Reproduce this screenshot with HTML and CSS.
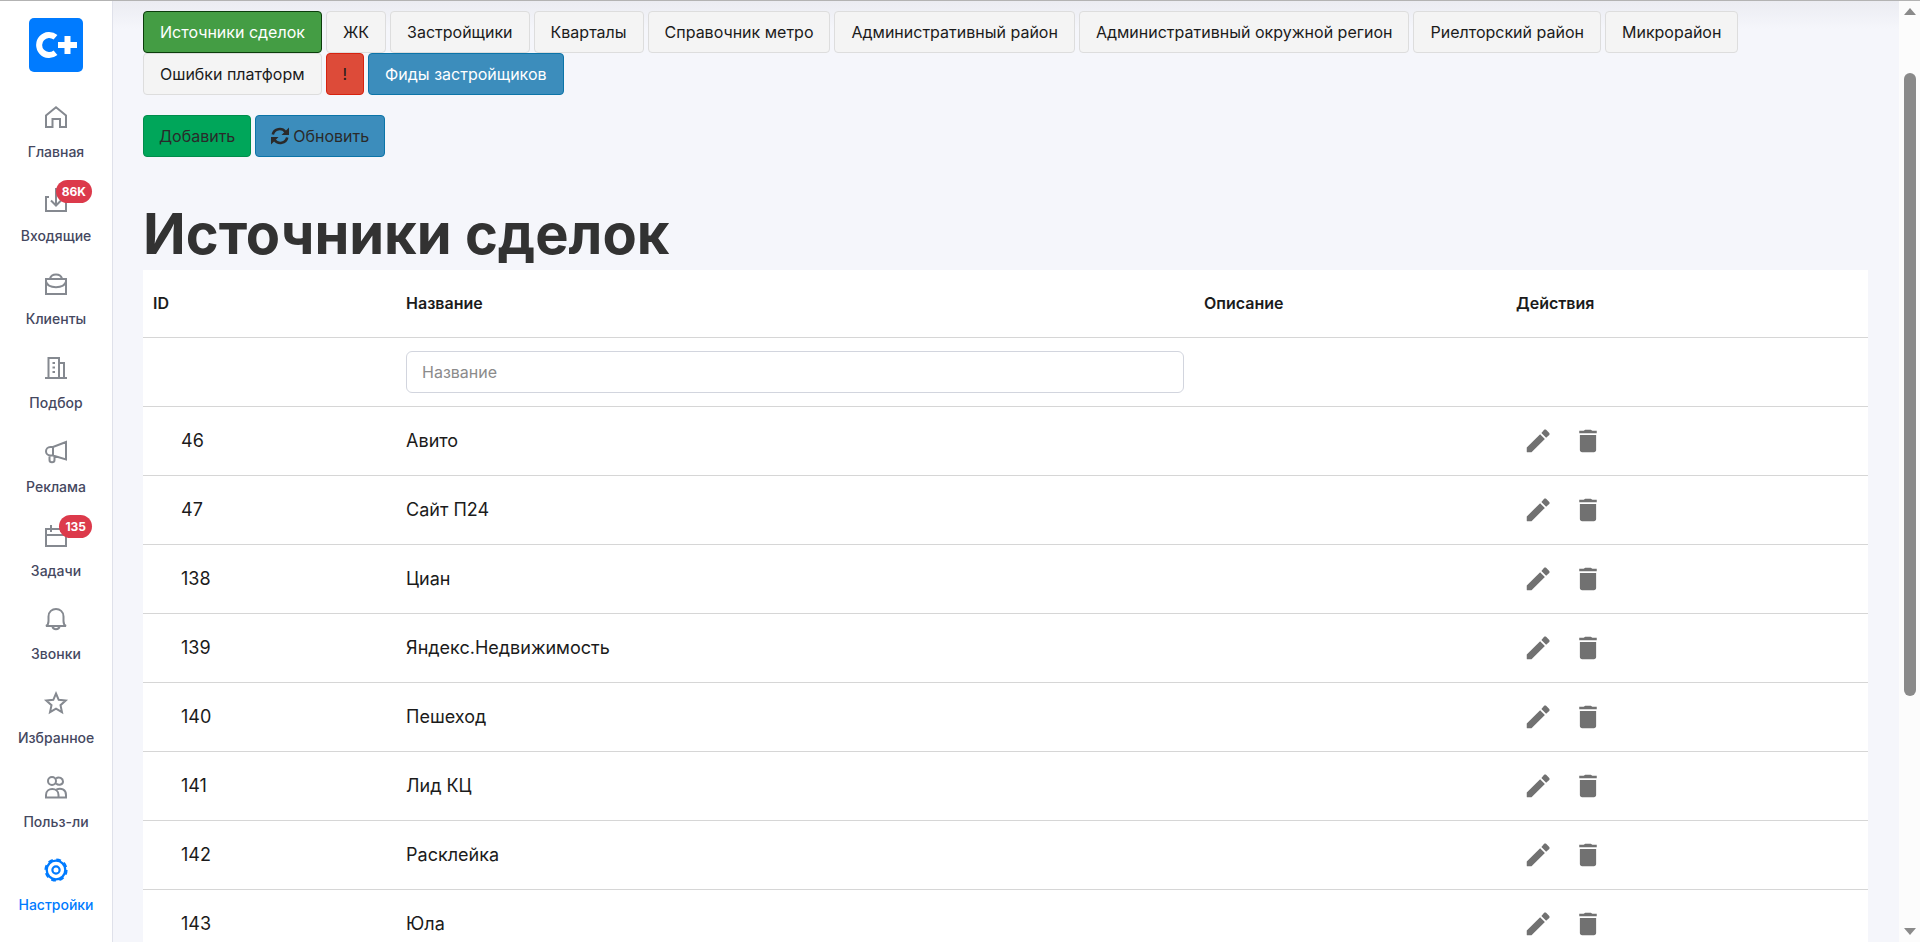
FILE: index.html
```html
<!DOCTYPE html>
<html lang="ru">
<head>
<meta charset="utf-8">
<title>Источники сделок</title>
<link rel="stylesheet" href="styles.css">
</head>
<body>
<svg class="sprite" aria-hidden="true">
  <symbol id="edit" viewBox="0 0 24 24"><path d="M3 17.2V20.5c0 .3.2.5.500.5H6.800L17.500 10.300 13.700 6.500zM21 5.500l-2.500-2.500c-.5-.4-1.100-.4-1.600 0L14.700 5.500l3.800 3.800L21 7.100c.4-.5.4-1.100 0-1.600z"/></symbol>
  <symbol id="trash" viewBox="0 0 24 24"><path d="M5.500 7.200h13v12c0 1-.8 1.800-1.800 1.800H7.300c-1 0-1.800-.8-1.800-1.800zM8.500 3.800 9.800 3h4.400l1.300.800H19v2H5v-2z"/></symbol>
</svg>
<div class="app">
  <aside class="sidebar">
    <a class="logo" href="#" aria-label="C+">
      <svg viewBox="0 0 54 54"><rect width="54" height="54" rx="5" fill="#007bff"/><path d="M26.500 19.300A10 10 0 1 0 26.500 34.700M29 27h19M38.500 18v18" fill="none" stroke="#fff" stroke-width="6"/></svg>
    </a>
    <nav class="menu">
      <a class="item" href="#"><svg class="icon" viewBox="0 0 22 22"><path d="M1 21V9.500L11 1.300 21 9.500V21h-6v-8H7.500v8z"/></svg><span class="label">Главная</span></a>
      <a class="item" href="#"><svg class="icon" viewBox="0 0 22 22"><path d="M4 7H1v14h20V7h-3M11 -2v17M6 10.500l5 5 5-5"/></svg><span class="badge">86K</span><span class="label">Входящие</span></a>
      <a class="item" href="#"><svg class="icon" viewBox="0 0 22 22"><path d="M1 6h20v15H1zM5 5.500c1.500-5.500 10.500-5.500 12 0M1 8.500c2 7.500 18 7.500 20 0"/></svg><span class="label">Клиенты</span></a>
      <a class="item" href="#"><svg class="icon" viewBox="0 0 22 22"><path d="M0 21h22M3.500 21V1H14v20M14 6h5v15"/><path d="M7.500 6h2.500M7.500 10.500h2.500M7.500 15h2.500"/></svg><span class="label">Подбор</span></a>
      <a class="item" href="#"><svg class="icon" viewBox="0 0 22 22"><path d="M21 1 8 6H5.500C-.5 6-.5 14.500 5.500 14.500H8l13 4zM8 6v8.500M4.500 14.500V19c0 3 5 3 5 0v-4"/></svg><span class="label">Реклама</span></a>
      <a class="item" href="#"><svg class="icon" viewBox="0 0 22 22"><path d="M1 4h20v17H1zM1 10h20M6 0v7M16 0v7"/></svg><span class="badge">135</span><span class="label">Задачи</span></a>
      <a class="item" href="#"><svg class="icon" viewBox="0 0 22 22"><path d="M1 18c2-1 2.500-3 2.500-5V8.500C3.500-1.500 18.500-1.500 18.500 8.500V13c0 2 .5 4 2.500 5zM7.500 18.500c.5 3.500 6.500 3.500 7 0"/></svg><span class="label">Звонки</span></a>
      <a class="item" href="#"><svg class="icon" viewBox="0 0 22 22"><path d="M11 1.500l2.700 6.300 7 .7-5.200 4.700 1.500 7L11 16.700l-6 3.500 1.500-7L1.300 8.500l7-.7z"/></svg><span class="label">Избранное</span></a>
      <a class="item" href="#"><svg class="icon" viewBox="0 0 22 22"><circle cx="7" cy="5" r="4"/><path d="M11 2.500c3-2.500 7 0 7 3s-4 4.500-7 2M1 21.500V19c0-8 12.500-8 12.500 0v2.500zM11.500 13.500C16 11.500 21 13.500 21 19v2.500h-7.500"/></svg><span class="label">Польз-ли</span></a>
      <a class="item active" href="#"><svg class="icon" viewBox="-1 -1 24 24"><circle cx="11" cy="11" r="9.300" stroke-width="2.300"/><circle cx="11" cy="11" r="10.700" stroke-width="1.800" stroke-dasharray="4.800 3.603"/><circle cx="11" cy="11" r="3.600" stroke-width="2.200"/></svg><span class="label">Настройки</span></a>
    </nav>
  </aside>

  <main class="content">
    <nav class="tabs">
      <a class="btn green" href="#">Источники сделок</a>
      <a class="btn" href="#">ЖК</a>
      <a class="btn" href="#">Застройщики</a>
      <a class="btn" href="#">Кварталы</a>
      <a class="btn" href="#">Справочник метро</a>
      <a class="btn" href="#">Административный район</a>
      <a class="btn" href="#">Административный окружной регион</a>
      <a class="btn" href="#">Риелторский район</a>
      <a class="btn" href="#">Микрорайон</a>
      <a class="btn" href="#">Ошибки платформ</a>
      <a class="btn danger" href="#">!</a>
      <a class="btn blue light" href="#">Фиды застройщиков</a>
    </nav>
    <div class="tools">
      <button class="btn add" type="button">Добавить</button>
      <button class="btn blue" type="button"><svg class="sync" viewBox="0 0 18 18"><path d="M1.800 7.500C3 1.500 11 .2 14.500 5M16.200 10.500C15 16.500 7 17.800 3.500 13" fill="none" stroke="currentColor" stroke-width="2.600"/><path d="M18 .5V8h-7.500zM0 17.500V10h7.500z" fill="currentColor"/></svg>Обновить</button>
    </div>
    <h1 class="title">Источники сделок</h1>
    <table class="grid">
      <colgroup><col class="c-id"><col class="c-name"><col class="c-desc"><col></colgroup>
      <thead>
        <tr><th>ID</th><th>Название</th><th>Описание</th><th>Действия</th></tr>
      </thead>
      <tbody>
        <tr><td></td><td><input class="filter" type="text" placeholder="Название" aria-label="Название"></td><td></td><td></td></tr>
        <tr><td class="num">46</td><td>Авито</td><td></td><td><div class="actions"><button type="button" aria-label="Изменить"><svg><use href="#edit"/></svg></button><button type="button" aria-label="Удалить"><svg><use href="#trash"/></svg></button></div></td></tr>
        <tr><td class="num">47</td><td>Сайт П24</td><td></td><td><div class="actions"><button type="button" aria-label="Изменить"><svg><use href="#edit"/></svg></button><button type="button" aria-label="Удалить"><svg><use href="#trash"/></svg></button></div></td></tr>
        <tr><td class="num">138</td><td>Циан</td><td></td><td><div class="actions"><button type="button" aria-label="Изменить"><svg><use href="#edit"/></svg></button><button type="button" aria-label="Удалить"><svg><use href="#trash"/></svg></button></div></td></tr>
        <tr><td class="num">139</td><td>Яндекс.Недвижимость</td><td></td><td><div class="actions"><button type="button" aria-label="Изменить"><svg><use href="#edit"/></svg></button><button type="button" aria-label="Удалить"><svg><use href="#trash"/></svg></button></div></td></tr>
        <tr><td class="num">140</td><td>Пешеход</td><td></td><td><div class="actions"><button type="button" aria-label="Изменить"><svg><use href="#edit"/></svg></button><button type="button" aria-label="Удалить"><svg><use href="#trash"/></svg></button></div></td></tr>
        <tr><td class="num">141</td><td>Лид КЦ</td><td></td><td><div class="actions"><button type="button" aria-label="Изменить"><svg><use href="#edit"/></svg></button><button type="button" aria-label="Удалить"><svg><use href="#trash"/></svg></button></div></td></tr>
        <tr><td class="num">142</td><td>Расклейка</td><td></td><td><div class="actions"><button type="button" aria-label="Изменить"><svg><use href="#edit"/></svg></button><button type="button" aria-label="Удалить"><svg><use href="#trash"/></svg></button></div></td></tr>
        <tr><td class="num">143</td><td>Юла</td><td></td><td><div class="actions"><button type="button" aria-label="Изменить"><svg><use href="#edit"/></svg></button><button type="button" aria-label="Удалить"><svg><use href="#trash"/></svg></button></div></td></tr>
      </tbody>
    </table>
  </main>

  <div class="scrollbar" aria-hidden="true">
    <svg class="arrow" viewBox="0 0 12 8"><path d="M6 0l6 7H0z"/></svg>
    <div class="track"><div class="thumb"></div></div>
    <svg class="arrow" viewBox="0 0 12 8"><path d="M6 8l6-7H0z"/></svg>
  </div>
</div>
</body>
</html>
```
FILE: styles.css
```css
*, *::before, *::after { box-sizing: border-box; }

body {
  margin: 0;
  font-family: Inter, Roboto, sans-serif;
  font-size: 16px;
  color: #1b1b1b;
  background: #f5f6fb;
}

a { color: inherit; text-decoration: none; }

.sprite { display: none; }

.app {
  display: flex;
  height: 100vh;
  overflow: hidden;
  border-top: 1px solid #b3b3b3;
}

/* Sidebar */
.sidebar {
  display: flex;
  flex: none;
  flex-direction: column;
  align-items: center;
  width: 113px;
  padding-top: 17px;
  background: #fff;
  border-right: 1px solid #dfe1ea;
}

.logo svg { display: block; width: 54px; height: 54px; }

.menu { display: flex; flex: 1; flex-direction: column; margin-top: 33px; }

.item {
  position: relative;
  display: flex;
  flex: 1;
  flex-direction: column;
  align-items: center;
  gap: 13px;
  width: 76px;
  font-size: 14px;
  font-weight: 500;
  line-height: 20px;
  color: #45485f;
}

.icon {
  flex: none;
  width: 22px;
  height: 24px;
  overflow: visible;
  fill: none;
  stroke: #858990;
  stroke-width: 2;
}

.active { color: #007bff; }
.active .icon { width: 26px; stroke: #007bff; }

.label { max-width: 76px; overflow: hidden; white-space: nowrap; }

.badge {
  position: absolute;
  top: -9px;
  right: 2px;
  padding: 0 6px;
  border-radius: 12px;
  background: #dc3a4b;
  color: #fff;
  font-size: 12px;
  font-weight: 700;
  line-height: 23px;
}

/* Content */
.content {
  flex: 1;
  min-width: 0;
  padding: 10px 31px 0 30px;
  background: linear-gradient(#ebecf2, #f5f6fb 28px);
}

.tabs, .tools { display: flex; flex-wrap: wrap; column-gap: 4px; }
.tools { margin-top: 20px; }

.btn {
  display: flex;
  align-items: center;
  gap: 4px;
  padding: 8px 15px;
  border: 1px solid #ddd;
  border-radius: 4px;
  background: #f4f4f4;
  color: #1b1b1b;
  font: 400 16px/24px Inter, Roboto, sans-serif;
}

.tabs .btn { padding: 8px 16px; }

.green { background: #449d44; border-color: #0b3d0b; color: #fff; }
.danger { background: #dd4b39; border-color: #d7220f; }
.blue { background: #3c8dbc; border-color: #0c74a8; }
.light { color: #fff; }
.add { background: #00a65a; border-color: #008d4c; }
.tools .btn { color: #2a2a2a; }

.sync { width: 18px; height: 18px; }

.title {
  margin: 43px 0 2px;
  font-size: 56px;
  font-weight: 700;
  line-height: 68px;
  color: #323232;
}

/* Table */
.grid {
  width: 100%;
  table-layout: fixed;
  border-collapse: collapse;
  background: #fff;
}

.c-id { width: 14.67%; }
.c-name { width: 46.26%; }
.c-desc { width: 18.09%; }

.grid th, .grid td {
  height: 69px;
  padding: 0 10px;
  border-bottom: 1px solid #d6d6d6;
  text-align: left;
  vertical-align: middle;
}

.grid th { height: 67px; font-weight: 600; }
.grid td { font-size: 18px; line-height: 26px; }
.grid .num { padding-left: 38px; }

.filter {
  display: block;
  width: 100%;
  height: 42px;
  padding: 0 15px;
  border: 1px solid #d2d5de;
  border-radius: 6px;
  font: 400 16px/24px Inter, Roboto, sans-serif;
}

.filter::placeholder { color: #8b8b8b; opacity: 1; }

.actions { display: flex; gap: 20px; padding-left: 7px; }

.actions button { display: block; padding: 0; border: 0; background: none; }

.actions svg { display: block; width: 30px; height: 30px; fill: #717171; }

/* Scrollbar */
.scrollbar {
  display: flex;
  flex: none;
  flex-direction: column;
  align-items: center;
  width: 21px;
  padding: 7px 0;
  background: #fcfcfc;
}

.arrow { flex: none; width: 12px; height: 8px; fill: #8a8a8a; }

.track { flex: 1; width: 12px; padding-top: 57px; }

.thumb { height: 73%; border-radius: 6px; background: #8a8a8a; }
```
